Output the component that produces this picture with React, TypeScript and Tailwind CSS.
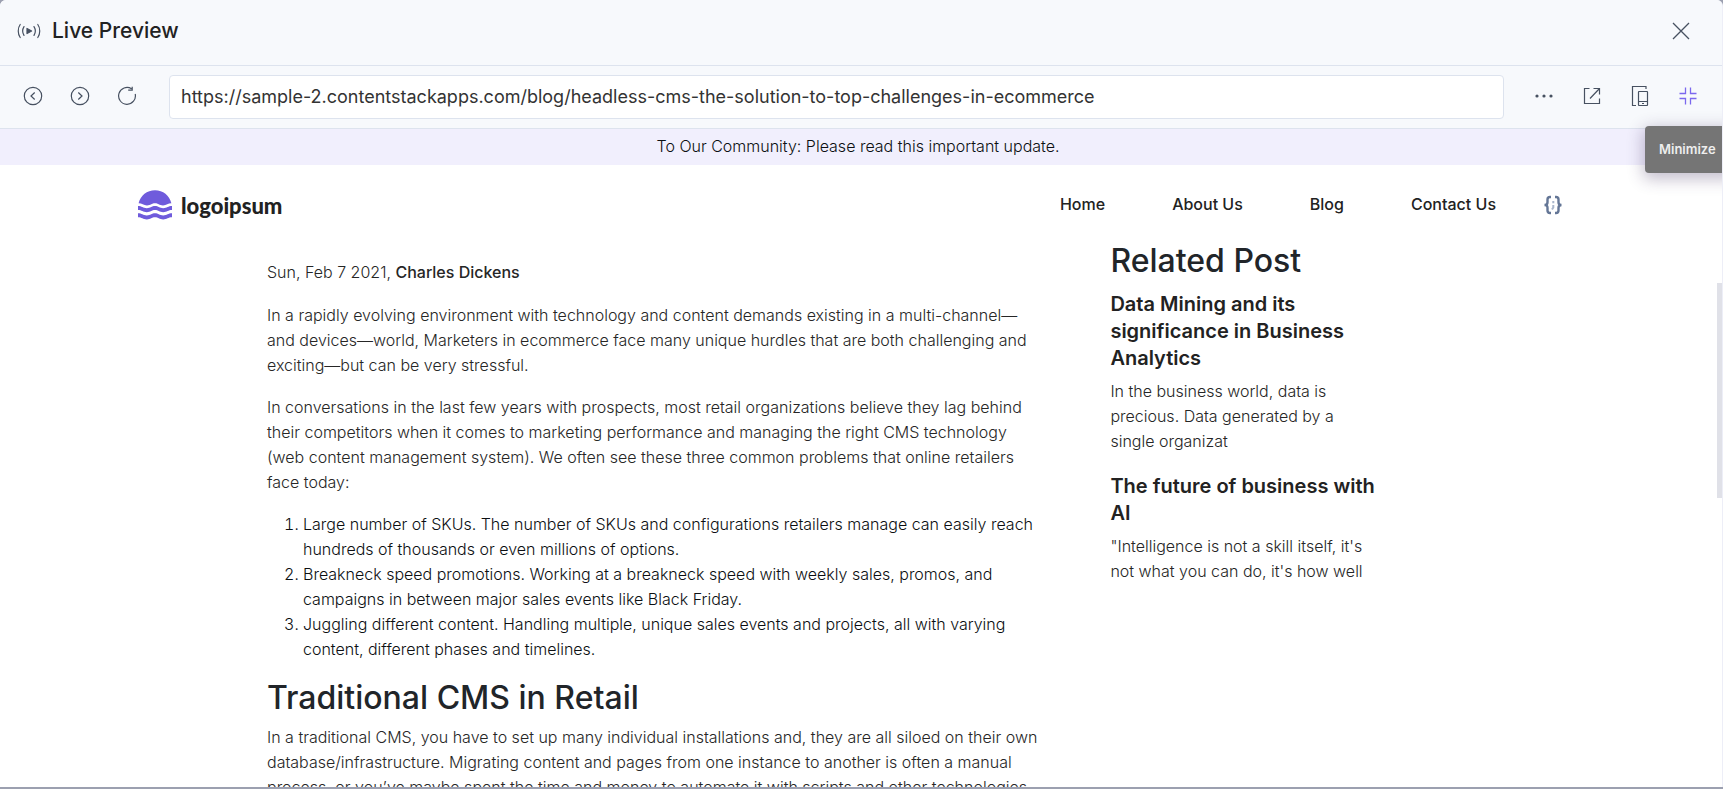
import type { ReactNode } from 'react';

const PAGE_URL =
  'https://sample-2.contentstackapps.com/blog/headless-cms-the-solution-to-top-challenges-in-ecommerce';

const navLinks = ['Home', 'About Us', 'Blog', 'Contact Us'];

const problems = [
  'Large number of SKUs. The number of SKUs and configurations retailers manage can easily reach hundreds of thousands or even millions of options.',
  'Breakneck speed promotions. Working at a breakneck speed with weekly sales, promos, and campaigns in between major sales events like Black Friday.',
  'Juggling different content. Handling multiple, unique sales events and projects, all with varying content, different phases and timelines.',
];

const relatedPosts = [
  {
    title: 'Data Mining and its significance in Business Analytics',
    text: 'In the business world, data is precious. Data generated by a single organizat',
  },
  {
    title: 'The future of business with AI',
    text: '"Intelligence is not a skill itself, it\'s not what you can do, it\'s how well',
  },
];

function IconButton({ label, children }: { label: string; children: ReactNode }) {
  return (
    <button
      type="button"
      aria-label={label}
      className="flex h-8 w-8 shrink-0 items-center justify-center text-[#475161]"
    >
      {children}
    </button>
  );
}

function LiveIcon() {
  return (
    <svg width="24" height="16" viewBox="0 0 24 16" fill="none" stroke="#475161" strokeWidth="1.2" strokeLinecap="round">
      <path d="M3.2 1.5C.6 5 .6 11 3.2 14.5M7 3.6c-1.6 2.6-1.6 6.2 0 8.8M20.8 1.5c2.6 3.5 2.6 9.5 0 13M17 3.6c1.6 2.6 1.6 6.2 0 8.8" />
      <path d="M10 5.4v5.2L14.6 8z" fill="#475161" strokeLinejoin="round" />
    </svg>
  );
}

function WaveLogo() {
  return (
    <svg width="34" height="30" viewBox="0 0 34 30" fill="#6f5bdc">
      <path d="M.6 13.3C2.5 5.6 9 .3 17 .3s14.5 5.3 16.4 13c-3.4 0-4.9 2.2-8.4 2.2-3.7 0-4.8-2.2-8-2.2s-4.3 2.2-8 2.2c-3.5 0-5-2.2-8.4-2.2z" />
      <path d="M0 16c3.8 0 5 2.2 8.8 2.2S13.7 16 17 16s4.4 2.2 8.2 2.2S30.2 16 34 16v4c-3.8 0-5 2.2-8.800 2.2S20.3 20 17 20s-4.4 2.2-8.2 2.2S3.8 20 0 20z" />
      <path d="M0 23.3c3.8 0 5 2.2 8.8 2.2s4.9-2.2 8.2-2.2 4.4 2.2 8.2 2.2 5-2.2 8.8-2.2v4c-3.8 0-5 2.2-8.8 2.2s-4.9-2.2-8.2-2.2-4.4 2.2-8.2 2.2-5-2.2-8.8-2.2z" />
    </svg>
  );
}

function JsonIcon() {
  return (
    <svg width="20" height="20" viewBox="0 0 20 20" fill="none" stroke="#647696" strokeWidth="2.4">
      <path d="M8 2H7C5.3 2 4.5 2.9 4.5 4.5v2.7C4.5 8.9 3.6 10 1.5 10c2.1 0 3 1.1 3 2.8v2.7C4.5 17.1 5.3 18 7 18h1M12 2h1c1.7 0 2.5.9 2.5 2.5v2.7c0 1.7.9 2.8 3 2.8-2.1 0-3 1.1-3 2.8v2.7c0 1.6-.8 2.5-2.5 2.5h-1" />
      <path d="M10.3 6v2.2M10.3 10v2.5l-1.3 2" stroke="#a9b6cc" strokeWidth="2" />
    </svg>
  );
}

function PreviewHeader() {
  return (
    <header className="flex h-[66px] shrink-0 items-center border-b border-[#dde3ee] bg-[#f7f9fc] pb-1 pl-[17px] pr-[25px]">
      <LiveIcon />
      <h1 className="ml-[11px] flex-1 text-[21px] font-medium leading-7 text-[#222222]">Live Preview</h1>
      <IconButton label="Close">
        <svg width="18" height="18" viewBox="0 0 18 18" stroke="currentColor" strokeWidth="1.3">
          <path d="M1 1l16 16M17 1L1 17" />
        </svg>
      </IconButton>
    </header>
  );
}

function Toolbar() {
  return (
    <div className="flex h-[63px] shrink-0 items-center border-b border-[#dde3ee] bg-[#f7f9fc] pl-[17px] pr-[18px]">
      <div className="flex gap-[15px] pb-[2px]">
        <IconButton label="Back">
          <svg width="20" height="20" viewBox="0 0 20 20" fill="none" stroke="currentColor" strokeWidth="1.2">
            <circle cx="10" cy="10" r="8.7" />
            <path d="M11.7 6.5L8 10l3.7 3.5" />
          </svg>
        </IconButton>
        <IconButton label="Forward">
          <svg width="20" height="20" viewBox="0 0 20 20" fill="none" stroke="currentColor" strokeWidth="1.2">
            <circle cx="10" cy="10" r="8.7" />
            <path d="M8.3 6.5L12 10l-3.7 3.5" />
          </svg>
        </IconButton>
        <IconButton label="Reload">
          <svg width="20" height="20" viewBox="0 0 20 20" fill="none" stroke="currentColor" strokeWidth="1.2">
            <path d="M18.2 8a8.4 8.4 0 1 1-3.7-5.2M15.2.8v3.4h-4" />
          </svg>
        </IconButton>
      </div>
      <input
        type="text"
        aria-label="Page URL"
        defaultValue={PAGE_URL}
        className="ml-[26px] mr-6 h-11 min-w-0 flex-1 rounded border border-[#dde3ee] bg-white px-[11px] pb-[2px] text-[18px] text-[#333333] outline-none"
      />
      <div className="flex gap-4 pb-[2px]">
        <IconButton label="More options">
          <svg width="20" height="20" viewBox="0 0 20 20" fill="currentColor">
            <circle cx="3" cy="10" r="1.6" />
            <circle cx="10" cy="10" r="1.6" />
            <circle cx="17" cy="10" r="1.6" />
          </svg>
        </IconButton>
        <IconButton label="Open in new tab">
          <svg width="18" height="18" viewBox="0 0 18 18" fill="none" stroke="currentColor" strokeWidth="1.2">
            <path d="M6.5 1.5h-5v15h15v-5M10.5 1.5h6v6M16.5 1.5l-9.5 10" />
          </svg>
        </IconButton>
        <IconButton label="Devices">
          <svg width="18" height="22" viewBox="0 0 18 22" fill="none" stroke="currentColor" strokeWidth="1.2">
            <path d="M15 4V1.5H1.5v19H5" />
            <rect x="7.5" y="6.5" width="9" height="14" rx=".5" />
            <path d="M7.5 16.5h9M11 18.5h2" />
          </svg>
        </IconButton>
        <div className="relative">
          <IconButton label="Minimize">
            <svg width="18" height="18" viewBox="0 0 18 18" fill="none" stroke="#7b68ee" strokeWidth="1.3">
              <path d="M.5 6.5h6v-6M11.500.5v6h6M.5 11.5h6v6M17.5 11.5h-6v6" />
            </svg>
          </IconButton>
          <div
            role="tooltip"
            className="absolute left-[-27px] top-[46px] z-10 flex h-[47px] w-[90px] items-center rounded bg-[#757575] pl-[14px] text-[13px] font-semibold text-[#eeeeee] shadow-[0_4px_16px_2px_rgba(60,40,90,0.3)]"
          >
            Minimize
          </div>
        </div>
      </div>
    </div>
  );
}

function SiteHeader() {
  return (
    <header className="flex items-center pl-[138px] pr-[153px] pt-[18px]">
      <a href="#" aria-label="logoipsum" className="flex h-11 items-center gap-[9px] text-[22px] font-black text-[#222222]">
        <WaveLogo />
        <span className="pt-px font-['Lato',sans-serif]">logoipsum</span>
      </a>
      <nav className="ml-auto flex items-center gap-[67px] pb-[2px] text-[16px] font-medium text-[#222222]">
        {navLinks.map((link) => (
          <a key={link} href="#">
            {link}
          </a>
        ))}
      </nav>
      <button type="button" aria-label="JSON preview" className="ml-[47px]">
        <JsonIcon />
      </button>
    </header>
  );
}

function Article() {
  return (
    <article className="min-w-0 flex-1 pt-[18px] text-[16px] font-light leading-[25px] text-[#262626]">
      <p className="mb-[18px]">
        Sun, Feb 7 2021, <strong className="font-medium">Charles Dickens</strong>
      </p>
      <p className="mb-[17px]">
        In a rapidly evolving environment with technology and content demands existing in a multi-channel—and
        devices—world, Marketers in ecommerce face many unique hurdles that are both challenging and exciting—but can be
        very stressful.
      </p>
      <p className="mb-[17px]">
        In conversations in the last few years with prospects, most retail organizations believe they lag behind their
        competitors when it comes to marketing performance and managing the right CMS technology (web content management
        system). We often see these three common problems that online retailers face today:
      </p>
      <ol className="mb-[17px] list-decimal pl-9 text-[#0c0f12]">
        {problems.map((item) => (
          <li key={item}>{item}</li>
        ))}
      </ol>
      <h2 className="mb-2 text-[32px] font-medium leading-[38px] text-[#212529]">Traditional CMS in Retail</h2>
      <p>
        In a traditional CMS, you have to set up many individual installations and, they are all siloed on their own
        database/infrastructure. Migrating content and pages from one instance to another is often a manual process, or
        you’ve maybe spent the time and money to automate it with scripts and other technologies.
      </p>
    </article>
  );
}

function RelatedPosts() {
  return (
    <aside className="w-[271px] shrink-0">
      <h2 className="mb-[11px] text-[32px] font-medium leading-[38px] text-[#212529]">Related Post</h2>
      {relatedPosts.map((post) => (
        <div key={post.title} className="mb-[19px]">
          <h3 className="mb-[7px] text-[20px] font-semibold leading-[27px] text-[#222222]">{post.title}</h3>
          <p className="text-[16px] font-light leading-[25px] text-[#262626]">{post.text}</p>
        </div>
      ))}
    </aside>
  );
}

export default function App() {
  return (
    <div className="h-screen bg-[#9ca0b0] pb-[2px] font-['Inter',sans-serif]">
      <div className="flex h-full flex-col overflow-hidden rounded-t-md border-r border-[#edeef7] bg-white">
        <PreviewHeader />
        <Toolbar />
        <div className="relative min-h-0 flex-1 overflow-hidden pr-[6px]">
          <div className="-mr-[6px] bg-[#f1effd] pb-[7px] pr-[6px] pt-[5px] text-center text-[16px] font-light leading-6 text-[#0c0f12]">
            To Our Community: Please read this important update.
          </div>
          <SiteHeader />
          <main className="flex items-start gap-[67px] pl-[267px] pr-[19.5%] pt-[15px]">
            <Article />
            <RelatedPosts />
          </main>
          {/* scrollbar thumb */}
          <div className="absolute right-0 top-[154px] h-[215px] w-[5px] bg-[#e0e1e8]" />
        </div>
      </div>
    </div>
  );
}
